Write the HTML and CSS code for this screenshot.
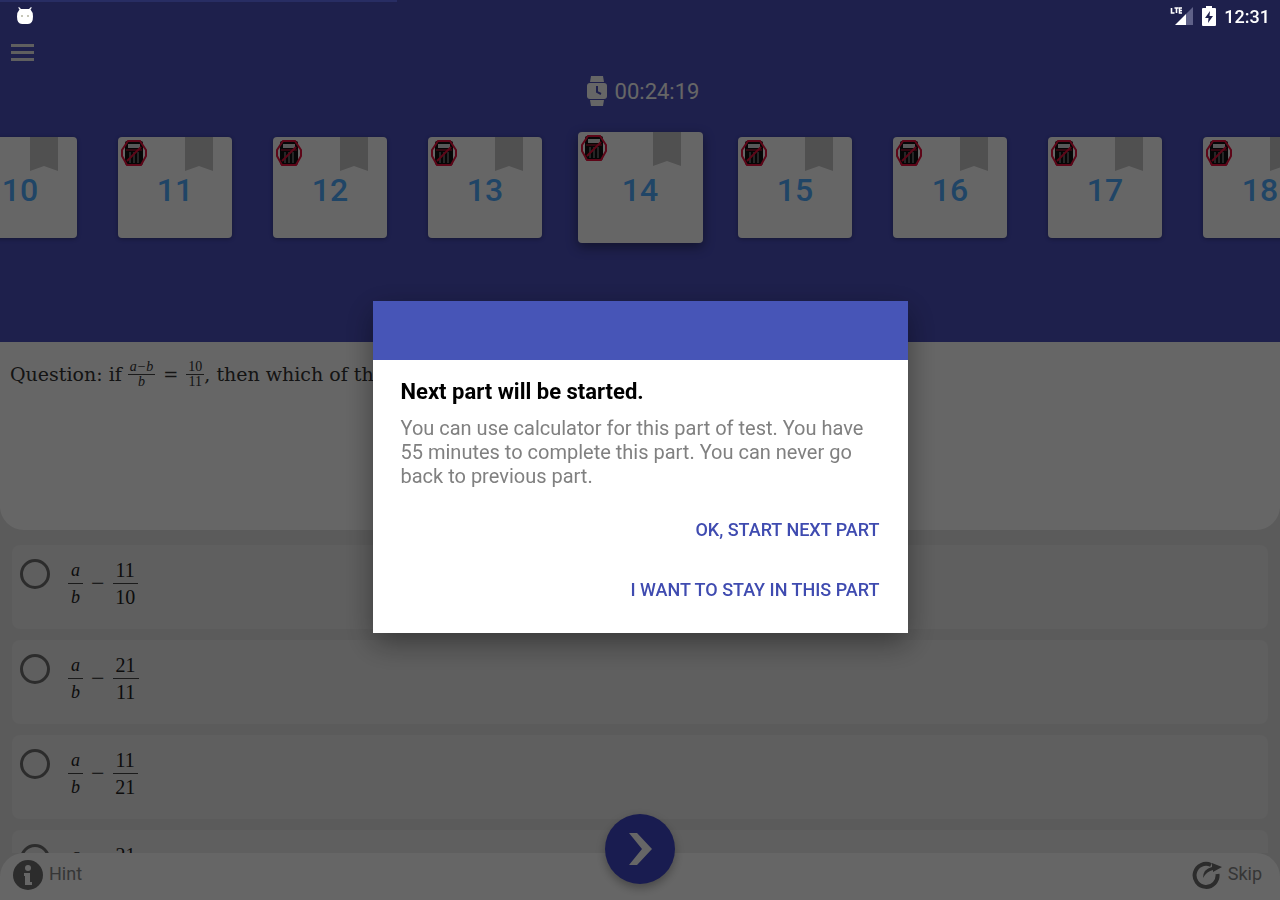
FILE: index.html
```html
<!DOCTYPE html>
<html lang="en">
<head>
    <meta charset="UTF-8">
    <meta name="viewport" content="width=device-width, initial-scale=1.0">
    <title>Practice Test</title>
    <link rel="stylesheet" href="styles.css">
</head>
<body>
    <!-- Shared icons -->
    <svg class="sprite" width="0" height="0">
        <symbol id="no-calc" viewBox="0 0 26 28">
            <rect x="4" y="2" width="18" height="24" rx="2" fill="#111"/>
            <rect x="7" y="5" width="12" height="4" fill="#ddd"/>
            <path d="M9 13v11M13 13v11M17 13v11" stroke="#aaa" stroke-width="1"/>
            <path d="M7 2h12l6 9v6l-5 9H6l-5-9v-6z" fill="none" stroke="#e8103c" stroke-width="2"/>
            <path d="M5 11h16" stroke="#e8103c" stroke-width="1"/>
            <path d="M6 22L20 8" stroke="#e8103c" stroke-width="2"/>
        </symbol>
        <symbol id="bookmark" viewBox="0 0 28 34">
            <path d="M0 0h28v34l-14-5-14 5z" fill="#c8c8c8"/>
        </symbol>
    </svg>

    <div class="status-bar">
        <svg width="18" height="18" viewBox="0 0 18 18">
            <path d="M3 0l2 2h8l2-2 .8.8-1.3 1.7Q17 5 17 9.500Q17 17 12 17H6Q1 17 1 9.500Q1 5 3.500 2.500L2.200.8z" fill="#fff"/>
            <circle cx="6" cy="9" r="1" fill="#b5b5a0"/>
            <circle cx="12" cy="9" r="1" fill="#b5b5a0"/>
        </svg>
        <div class="status-right">
            <svg width="24" height="20" viewBox="0 0 24 20">
                <path d="M23 1v18h-7V8z" fill="#5f6188"/>
                <path d="M16 8v11H5z" fill="#fff"/>
                <path d="M1.500 2v5h3M4.500 2h4M6.500 2v5M12 2H9.500v5H12M9.500 4.500H12" fill="none" stroke="#fff" stroke-width="1.600"/>
            </svg>
            <svg width="14" height="20" viewBox="0 0 14 20">
                <path d="M4 0h6v2h3q1 0 1 1v16q0 1-1 1H1q-1 0-1-1V3q0-1 1-1h3z" fill="#fff"/>
                <path d="M8 5l-5 7h3.500L6 17l5-7H7.500z" fill="#1e204c"/>
            </svg>
            <span>12:31</span>
        </div>
    </div>

    <div class="app">
        <header>
            <div class="progress"></div>
            <button type="button" class="menu" aria-label="Menu">
                <span></span><span></span><span></span>
            </button>
            <div class="timer">
                <svg width="20" height="32" viewBox="0 0 20 32">
                    <path d="M4 1h12l1 6H3zM3 25h14l-1 6H4z" fill="#fff"/>
                    <rect x="0" y="8" width="20" height="16" rx="3" fill="#fff"/>
                    <path d="M10 11v6l4 2" fill="none" stroke="#4b50be" stroke-width="2"/>
                </svg>
                <span>00:24:19</span>
            </div>
            <ol class="tiles" id="tiles"></ol>
        </header>

        <main>
            <section class="question">
                <span>Question: if</span>
                <span class="frac"><i>a−b</i><i>b</i></span>
                <span class="eq">=</span>
                <span class="frac"><span>10</span><span>11</span></span><span>, then which of th</span>
            </section>
            <section class="answers" id="answers"></section>
        </main>

        <footer>
            <button type="button" class="foot-btn">
                <svg width="30" height="30" viewBox="0 0 30 30">
                    <circle cx="15" cy="15" r="15" fill="#6e6e6e"/>
                    <circle cx="15" cy="8" r="3" fill="#fff"/>
                    <path d="M11 13h6v9h2v3h-7v-9h-1z" fill="#fff"/>
                </svg>
                Hint
            </button>
            <button type="button" class="next" aria-label="Next question">
                <svg width="70" height="70" viewBox="0 0 70 70">
                    <path d="M24 19h8l15 16-15 16h-8l13-16z" fill="#fff"/>
                </svg>
            </button>
            <button type="button" class="foot-btn">
                <svg width="30" height="30" viewBox="0 0 30 30">
                    <path d="M19 5A11.500 11.500 0 1 0 25.500 14" fill="none" stroke="#6e6e6e" stroke-width="4"/>
                    <path d="M11 18q0-9 9-11V3l10 4-9 5v-2q-6 1-10 8z" fill="#6e6e6e"/>
                </svg>
                Skip
            </button>
        </footer>
    </div>

    <div class="overlay">
        <div class="dialog" role="dialog" aria-labelledby="dialogTitle">
            <div class="dialog-bar"></div>
            <div class="dialog-body">
                <h2 id="dialogTitle">Next part will be started.</h2>
                <p>You can use calculator for this part of test. You have 55 minutes to complete this part. You can never go back to previous part.</p>
                <button type="button">OK, START NEXT PART</button>
                <button type="button">I WANT TO STAY IN THIS PART</button>
            </div>
        </div>
    </div>

    <script>
        // Question tiles
        const current = 14;
        let tiles = '';
        for (let n = 10; n <= 18; n++) {
            tiles += `
                <li>
                    <button type="button" class="tile${n === current ? ' active' : ''}">
                        <svg class="calc" width="26" height="28"><use href="#no-calc"/></svg>
                        <svg class="mark" width="28" height="34"><use href="#bookmark"/></svg>
                        ${n}
                    </button>
                </li>`;
        }
        document.getElementById('tiles').innerHTML = tiles;

        // Answer options
        const options = [[11, 10], [21, 11], [11, 21], [21, 10]];
        document.getElementById('answers').innerHTML = options.map(([top, bottom]) => `
            <label class="answer">
                <input type="radio" name="answer">
                <span class="frac"><i>a</i><i>b</i></span>
                <span class="eq">−</span>
                <span class="frac"><span>${top}</span><span>${bottom}</span></span>
            </label>`).join('');
    </script>
</body>
</html>
```

FILE: styles.css
```css
* {
    box-sizing: border-box;
}

body {
    margin: 0;
    font-family: Roboto, sans-serif;
    background-color: #e4e4e4;
}

button {
    border: none;
    background: none;
    padding: 0;
    font-family: inherit;
    cursor: pointer;
}

.sprite {
    position: absolute;
}

/* Status bar stays above the dimmed screen */
.status-bar {
    position: fixed;
    top: 0;
    left: 0;
    right: 0;
    z-index: 20;
    height: 32px;
    padding: 0 10px 0 16px;
    display: flex;
    justify-content: space-between;
    align-items: center;
}

.status-right {
    display: flex;
    align-items: center;
    gap: 8px;
    color: #fff;
    font-size: 18px;
    font-weight: 500;
}

.app {
    height: 100vh;
    display: flex;
    flex-direction: column;
    overflow: hidden;
}

header {
    background-color: #4b50be;
    padding-bottom: 99px;
}

.progress {
    width: 31%;
    height: 2px;
    background-color: #6470f8;
}

.menu {
    display: flex;
    flex-direction: column;
    gap: 4px;
    margin: 42px 0 0 11px;
}

.menu span {
    width: 23px;
    height: 3px;
    background-color: #eee;
}

.timer {
    display: flex;
    justify-content: center;
    align-items: center;
    gap: 8px;
    height: 32px;
    margin: 14px 0 25px;
    padding-left: 6px;
    color: #fff;
    font-size: 22px;
}

.tiles {
    list-style: none;
    margin: 0;
    padding: 0;
    display: flex;
    justify-content: center;
    align-items: center;
    height: 111px;
}

.tiles li {
    flex: 0 0 155px;
    display: flex;
    justify-content: center;
}

.tile {
    position: relative;
    width: 114px;
    height: 101px;
    padding-top: 4px;
    border-radius: 4px;
    background-color: #fff;
    box-shadow: 0 1px 4px rgba(0, 0, 0, 0.3);
    color: #50acff;
    font-size: 32px;
    font-weight: 500;
}

.tile.active {
    width: 125px;
    height: 111px;
    box-shadow: 0 4px 12px rgba(0, 0, 0, 0.4);
}

.tile .calc {
    position: absolute;
    top: 2px;
    left: 3px;
}

.tile .mark {
    position: absolute;
    top: 0;
    right: 19px;
}

.tile.active .mark {
    right: 22px;
}

main {
    flex: 1;
    min-height: 0;
    overflow: hidden;
}

.question {
    display: flex;
    align-items: center;
    height: 188px;
    padding: 0 10px 124px;
    border-radius: 0 0 24px 24px;
    background-color: #fff;
    color: #333;
    font-family: "DejaVu Serif", serif;
    font-size: 19px;
    white-space: nowrap;
}

.frac {
    display: inline-flex;
    flex-direction: column;
    align-items: center;
    font-family: "Liberation Serif", serif;
}

.frac > :first-child {
    border-bottom: 1px solid #444;
    padding: 0 2px;
}

.question .frac {
    margin: 0 0 0 6px;
    font-size: 14px;
    line-height: 14px;
}

.question .eq {
    margin: 0 2px 0 8px;
    font-size: 18px;
}

.answers {
    padding: 15px 12px 0;
    display: flex;
    flex-direction: column;
    gap: 11px;
}

.answer {
    display: flex;
    align-items: flex-start;
    flex: 0 0 84px;
    padding: 12px 8px;
    border-radius: 8px;
    background-color: #ededed;
    color: #222;
}

.answer input {
    appearance: none;
    width: 30px;
    height: 30px;
    margin: 2px 18px 0 0;
    border: 3px solid #6e6e6e;
    border-radius: 50%;
}

.answer .frac {
    font-size: 20px;
    line-height: 26px;
}

.answer .frac > :first-child {
    padding: 0 3px;
}

.answer .frac i {
    font-size: 18px;
}

.answer .eq {
    margin: 0 8px;
    font-family: "Liberation Serif", serif;
    font-size: 24px;
    line-height: 52px;
}

footer {
    position: relative;
    display: flex;
    justify-content: space-between;
    height: 47px;
    padding: 0 18px 0 13px;
    border-radius: 24px 24px 0 0;
    background-color: #fff;
}

.foot-btn {
    display: flex;
    align-items: center;
    gap: 6px;
    height: 40px;
    color: #888;
    font-size: 18px;
}

.foot-btn svg {
    margin-top: 4px;
}

/* Floating button over the footer edge */
.next {
    position: absolute;
    left: 50%;
    bottom: 16px;
    width: 70px;
    height: 70px;
    margin-left: -35px;
    border-radius: 50%;
    background-color: #3f46c8;
    box-shadow: 0 4px 10px rgba(0, 0, 0, 0.3);
}

.overlay {
    position: fixed;
    inset: 0;
    z-index: 10;
    display: flex;
    justify-content: center;
    align-items: center;
    padding-top: 34px;
    background-color: rgba(0, 0, 0, 0.6);
}

.dialog {
    width: 90%;
    max-width: 535px;
    background-color: #fff;
    box-shadow: 0 10px 28px rgba(0, 0, 0, 0.4);
}

.dialog-bar {
    height: 59px;
    background-color: #4755b7;
}

.dialog-body {
    display: flex;
    flex-direction: column;
    align-items: flex-end;
    gap: 12px;
    padding: 20px 28px 20px;
}

.dialog h2 {
    align-self: stretch;
    margin: 0;
    color: #000;
    font-size: 22px;
    font-weight: 700;
    line-height: 24px;
}

.dialog p {
    align-self: stretch;
    margin: 0 0 5px;
    color: #808080;
    font-size: 20px;
    line-height: 24px;
}

.dialog button {
    height: 48px;
    color: #3f4bb0;
    font-size: 18px;
    font-weight: 500;
}
```
